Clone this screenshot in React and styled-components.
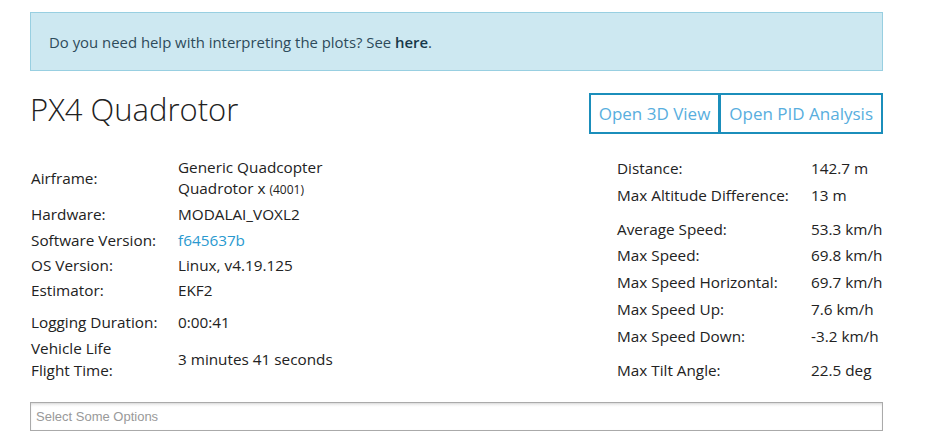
import React from "react";
import styled, { createGlobalStyle } from "styled-components";

const GlobalStyle = createGlobalStyle`
  html, body {
    margin: 0;
    padding: 0;
    background: #fff;
  }
  body {
    font-family: "Open Sans", "DejaVu Sans", sans-serif;
    font-size: 15.3px;
    color: #222;
  }
`;

const Page = styled.div`
  width: 853px;
  padding: 12px 0 0 30px;
`;

const Alert = styled.div`
  box-sizing: border-box;
  height: 59px;
  display: flex;
  align-items: center;
  padding: 0 18px;
  background: #cde8f1;
  border: 1px solid #98cfe1;
  color: #2d4b5b;
  font-size: 14.9px;

  b {
    color: #17384a;
    font-weight: 600;
  }
`;

const Header = styled.div`
  display: flex;
  justify-content: space-between;
  align-items: flex-start;
  margin-top: 22px;
`;

const Title = styled.h1`
  margin: 0;
  font-size: 31px;
  font-weight: 300;
  line-height: 33px;
  color: #222;
`;

const ButtonGroup = styled.div`
  display: flex;
`;

const Button = styled.button`
  box-sizing: border-box;
  height: 41px;
  padding: 0 8px;
  background: #fff;
  border: 2px solid #1b8ebb;
  margin-left: ${(p) => (p.$first ? "0" : "-1px")};
  font-family: "Open Sans", sans-serif;
  font-size: 17px;
  color: #58aede;
  cursor: pointer;
`;

const Info = styled.div`
  display: flex;
  justify-content: space-between;
  margin-top: 21px;
`;

const Table = styled.table`
  border-collapse: collapse;
  margin-top: ${(p) => p.$gap || 0}px;

  td {
    padding: ${(p) => p.$pad}px 0;
    line-height: ${(p) => p.$lh}px;
    vertical-align: middle;
  }
`;

const Label = styled.td`
  width: ${(p) => p.$w}px;
  padding-left: 1px !important;
`;

const Value = styled.td`
  width: ${(p) => p.$w || "auto"};
  white-space: nowrap;
  color: ${(p) => (p.$link ? "#2a99cf" : "inherit")};
`;

const Small = styled.span`
  font-size: 12px;
`;

const Select = styled.div`
  box-sizing: border-box;
  margin-top: 19px;
  height: 29px;
  width: 853px;
  border: 1px solid #aaa;
  background: linear-gradient(#eee 1%, #fff 15%);
  box-shadow: inset 0 1px 2px rgba(0, 0, 0, 0.08);
  padding: 0 5px;
  display: flex;
  align-items: center;
  font-family: "Liberation Sans", Arial, sans-serif;
  font-size: 13px;
  color: #999;
`;

const leftA = [
  ["Airframe:", <>Generic Quadcopter<br />Quadrotor x <Small>(4001)</Small></>],
  ["Hardware:", "MODALAI_VOXL2"],
  ["Software Version:", "f645637b", true],
  ["OS Version:", "Linux, v4.19.125"],
  ["Estimator:", "EKF2"],
];

const leftB = [
  ["Logging Duration:", "0:00:41"],
  [<>Vehicle Life<br />Flight Time:</>, "3 minutes 41 seconds"],
];

const rightGroups = [
  [
    ["Distance:", "142.7 m"],
    ["Max Altitude Difference:", "13 m"],
  ],
  [
    ["Average Speed:", "53.3 km/h"],
    ["Max Speed:", "69.8 km/h"],
    ["Max Speed Horizontal:", "69.7 km/h"],
    ["Max Speed Up:", "7.6 km/h"],
    ["Max Speed Down:", "-3.2 km/h"],
  ],
  [["Max Tilt Angle:", "22.5 deg"]],
];

function Rows({ rows, w, vw }) {
  return (
    <tbody>
      {rows.map(([label, value, link], i) => (
        <tr key={i}>
          <Label $w={w}>{label}</Label>
          <Value $w={vw} $link={link}>{value}</Value>
        </tr>
      ))}
    </tbody>
  );
}

export default function App() {
  return (
    <>
      <GlobalStyle />
      <Page>
        <Alert>
          <span>
            Do you need help with interpreting the plots? See <b>here</b>.
          </span>
        </Alert>
        <Header>
          <Title>PX4 Quadrotor</Title>
          <ButtonGroup>
            <Button $first>Open 3D View</Button>
            <Button>Open PID Analysis</Button>
          </ButtonGroup>
        </Header>
        <Info>
          <div>
            <Table $pad={2} $lh={21.2}>
              <Rows rows={leftA} w={147} />
            </Table>
            <Table $pad={2} $lh={22} $gap={6}>
              <Rows rows={leftB} w={147} />
            </Table>
          </div>
          <div>
            {rightGroups.map((g, i) => (
              <Table key={i} $pad={3} $lh={20.8} $gap={i === 0 ? 0 : 7}>
                <Rows rows={g} w={194} vw="72px" />
              </Table>
            ))}
          </div>
        </Info>
        <Select>Select Some Options</Select>
      </Page>
    </>
  );
}
